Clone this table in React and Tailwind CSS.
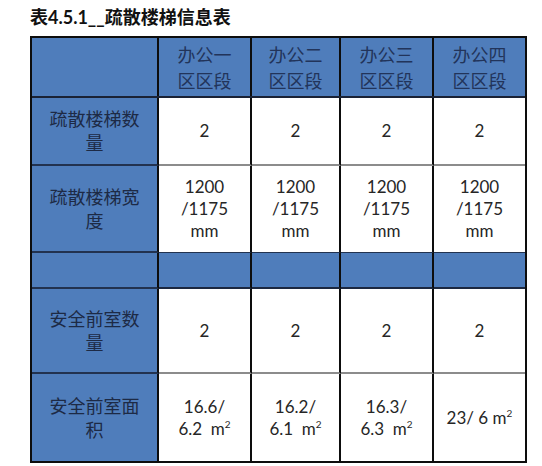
const font = { fontFamily: '"Lato", "Noto Sans CJK SC", sans-serif' }

const heads = ['办公一', '办公二', '办公三', '办公四']
const cols = ['w-[127px]', 'w-[93px]', 'w-[89px]', 'w-[93px]', 'w-[91px]']

function Sq() {
    return <sup className="text-[10px] relative -top-[7px]">2</sup>
}

function M2({ a, b }) {
    return (
        <>
            {a}
            <br />
            {b}
            {'\u00a0 '}m<Sq />
        </>
    )
}

const rows = [
    {
        h: 'h-[68px]',
        label: ['疏散楼梯数', '量'],
        cells: ['2', '2', '2', '2'],
        line: 'border-b-2 border-b-[#8c8c8c]',
    },
    {
        h: 'h-[87px]',
        label: ['疏散楼梯宽', '度'],
        cells: Array(4).fill(
            <>
                1200
                <br />
                /1175
                <br />
                mm
            </>
        ),
        line: 'border-b border-b-[#22324f]',
    },
    { h: 'h-[36px]', blue: true, line: 'border-b-2 border-b-[#1c2840]' },
    {
        h: 'h-[85px]',
        label: ['安全前室数', '量'],
        cells: ['2', '2', '2', '2'],
        line: 'border-b-2 border-b-[#8c8c8c]',
    },
    {
        h: 'h-[87px]',
        label: ['安全前室面', '积'],
        cells: [
            <M2 a="16.6/" b="6.2" />,
            <M2 a="16.2/" b="6.1" />,
            <M2 a="16.3/" b="6.3" />,
            <>
                23/ 6 m<Sq />
            </>,
        ],
        line: '',
    },
]

export default function App() {
    return (
        <div className="w-[542px] h-[466px] bg-white pl-[30px] pt-[7px]" style={font}>
            <h1 className="text-[18px] leading-[20px] font-bold text-[#111]">
                表4.5.1__疏散楼梯信息表
            </h1>
            <div className="mt-[9px] w-[497px] border-2 border-[#0d0d0d]">
                {/* header */}
                <div className="flex h-[60px] border-b-2 border-b-[#1a2235] bg-[#4f7dbb] text-[#22345a]">
                    <div className={`${cols[0]} border-r-2 border-r-[#0d0d0d]`} />
                    {heads.map((t, i) => (
                        <div
                            key={t}
                            className={`${cols[i + 1]} ${i < 3 ? 'border-r-2 border-r-[#0d0d0d]' : ''} flex items-center justify-center text-center text-[18px] leading-[26px] pt-[2px]`}
                        >
                            <p>
                                {t}
                                <br />
                                区区段
                            </p>
                        </div>
                    ))}
                </div>

                {rows.map((r, ri) => (
                    <div key={ri} className={`flex ${r.h}`}>
                        <div
                            className={`${cols[0]} border-r-2 border-r-[#0d0d0d] bg-[#4f7dbb] text-[#1d2a45] flex items-center justify-center text-center text-[18px] leading-[24px] ${ri < rows.length - 1 ? 'border-b-2 border-b-[#22324f]' : ''}`}
                        >
                            {r.label && (
                                <p>
                                    {r.label[0]}
                                    <br />
                                    {r.label[1]}
                                </p>
                            )}
                        </div>
                        {[0, 1, 2, 3].map((i) => (
                            <div
                                key={i}
                                className={`${cols[i + 1]} ${i < 3 ? 'border-r-2 border-r-[#0d0d0d]' : ''} ${r.line} ${r.blue ? 'bg-[#4f7dbb]' : 'bg-white'} flex items-center justify-center text-center text-[17px] leading-[22px] text-[#262626]`}
                            >
                                {r.cells && <p>{r.cells[i]}</p>}
                            </div>
                        ))}
                    </div>
                ))}
            </div>
        </div>
    )
}
